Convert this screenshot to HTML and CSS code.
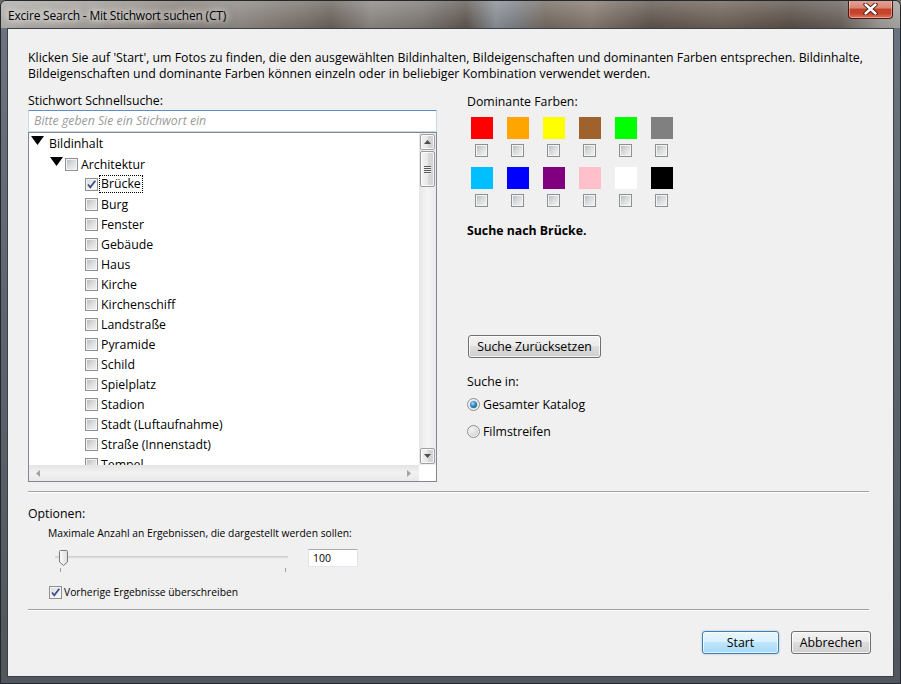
FILE: index.html
```html
<!DOCTYPE html>
<html lang="de">
<head>
<meta charset="utf-8">
<title>Excire Search - Mit Stichwort suchen (CT)</title>
<link rel="stylesheet" href="styles.css">
</head>
<body>
<div class="window">
  <div class="titlebar">
    <span class="title">Excire Search - Mit Stichwort suchen (CT)</span>
    <div class="close">
      <svg width="15" height="12" viewBox="0 0 15 12"><path d="M2.5 1.5 L12.5 10.5 M12.5 1.5 L2.5 10.5" stroke="#3a1510" stroke-width="4.2" stroke-linecap="round"/><path d="M2.5 1.5 L12.5 10.5 M12.5 1.5 L2.5 10.5" stroke="#fff" stroke-width="2.4" stroke-linecap="round"/></svg>
    </div>
  </div>
  <div class="client">
    <p class="intro">Klicken Sie auf 'Start', um Fotos zu finden, die den ausgewählten Bildinhalten, Bildeigenschaften und dominanten Farben entsprechen. Bildinhalte,<br>Bildeigenschaften und dominante Farben können einzeln oder in beliebiger Kombination verwendet werden.</p>

    <div class="main">
      <div class="left">
        <div class="label">Stichwort Schnellsuche:</div>
        <div class="search">Bitte geben Sie ein Stichwort ein</div>
        <div class="tree">
          <div class="view">
            <div class="row lvl0"><svg class="tri" width="13" height="9" viewBox="0 0 13 9"><polygon points="0,0 13,0 6.5,9" fill="#000"/></svg><span>Bildinhalt</span></div>
            <div class="row lvl1"><svg class="tri" width="13" height="9" viewBox="0 0 13 9"><polygon points="0,0 13,0 6.5,9" fill="#000"/></svg><span class="cb"></span><span>Architektur</span></div>
            <div class="row lvl2"><span class="cb checked"><svg width="11" height="11" viewBox="0 0 11 11"><path d="M2 5.5 L4.3 8.3 L9.3 1.8" fill="none" stroke="#3b4f8a" stroke-width="1.8"/></svg></span><span class="focus">Brücke</span></div>
            <div class="row lvl2"><span class="cb"></span><span>Burg</span></div>
            <div class="row lvl2"><span class="cb"></span><span>Fenster</span></div>
            <div class="row lvl2"><span class="cb"></span><span>Gebäude</span></div>
            <div class="row lvl2"><span class="cb"></span><span>Haus</span></div>
            <div class="row lvl2"><span class="cb"></span><span>Kirche</span></div>
            <div class="row lvl2"><span class="cb"></span><span>Kirchenschiff</span></div>
            <div class="row lvl2"><span class="cb"></span><span>Landstraße</span></div>
            <div class="row lvl2"><span class="cb"></span><span>Pyramide</span></div>
            <div class="row lvl2"><span class="cb"></span><span>Schild</span></div>
            <div class="row lvl2"><span class="cb"></span><span>Spielplatz</span></div>
            <div class="row lvl2"><span class="cb"></span><span>Stadion</span></div>
            <div class="row lvl2"><span class="cb"></span><span>Stadt (Luftaufnahme)</span></div>
            <div class="row lvl2"><span class="cb"></span><span>Straße (Innenstadt)</span></div>
            <div class="row lvl2"><span class="cb"></span><span>Tempel</span></div>
          </div>
          <div class="vscroll">
            <div class="sbtn"><svg width="7" height="4" viewBox="0 0 7 4"><polygon points="0,4 7,4 3.5,0" fill="#4d4d4d"/></svg></div>
            <div class="thumb"><span class="grip"></span><span class="grip"></span><span class="grip"></span><span class="grip"></span></div>
            <div class="track"></div>
            <div class="sbtn"><svg width="7" height="4" viewBox="0 0 7 4"><polygon points="0,0 7,0 3.5,4" fill="#4d4d4d"/></svg></div>
          </div>
          <div class="hscroll">
            <svg width="4" height="7" viewBox="0 0 4 7"><polygon points="4,0 4,7 0,3.5" fill="#a3a3a3"/></svg>
            <svg width="4" height="7" viewBox="0 0 4 7"><polygon points="0,0 0,7 4,3.5" fill="#a3a3a3"/></svg>
          </div>
          <div class="corner"></div>
        </div>
      </div>

      <div class="right">
        <div class="label">Dominante Farben:</div>
        <div class="colors">
          <div class="cell"><span class="sw" style="background:#ff0000"></span><span class="cb"></span></div>
          <div class="cell"><span class="sw" style="background:#ffa500"></span><span class="cb"></span></div>
          <div class="cell"><span class="sw" style="background:#ffff00"></span><span class="cb"></span></div>
          <div class="cell"><span class="sw" style="background:#a0622d"></span><span class="cb"></span></div>
          <div class="cell"><span class="sw" style="background:#00ff00"></span><span class="cb"></span></div>
          <div class="cell"><span class="sw" style="background:#808080"></span><span class="cb"></span></div>
          <div class="cell"><span class="sw" style="background:#00bfff"></span><span class="cb"></span></div>
          <div class="cell"><span class="sw" style="background:#0000ff"></span><span class="cb"></span></div>
          <div class="cell"><span class="sw" style="background:#800080"></span><span class="cb"></span></div>
          <div class="cell"><span class="sw" style="background:#ffc0cb"></span><span class="cb"></span></div>
          <div class="cell"><span class="sw" style="background:#ffffff"></span><span class="cb"></span></div>
          <div class="cell"><span class="sw" style="background:#000000"></span><span class="cb"></span></div>
        </div>
        <div class="status">Suche nach Brücke.</div>
        <button class="btn reset">Suche Zurücksetzen</button>
        <div class="label searchin">Suche in:</div>
        <div class="radio-row first"><span class="radio on"></span><span>Gesamter Katalog</span></div>
        <div class="radio-row"><span class="radio"></span><span>Filmstreifen</span></div>
      </div>
    </div>

    <div class="sep sep1"></div>

    <div class="options">
      <div class="label">Optionen:</div>
      <div class="small maxlabel">Maximale Anzahl an Ergebnissen, die dargestellt werden sollen:</div>
      <div class="slider-row">
        <svg class="slider" width="240" height="26" viewBox="0 0 240 26">
          <rect x="5" y="9.5" width="233" height="1" fill="#b4b4b4"/>
          <rect x="5" y="10.5" width="233" height="1" fill="#e6e6e6"/>
          <rect x="10" y="21" width="1" height="4" fill="#a0a0a0"/>
          <rect x="235" y="21" width="1" height="4" fill="#a0a0a0"/>
          <defs><linearGradient id="tg" x1="0" x2="1" y1="0" y2="0"><stop offset="0" stop-color="#fdfdfd"/><stop offset="1" stop-color="#dcdcdc"/></linearGradient></defs>
          <path d="M9.5 4.5 Q9.5 3.5 10.5 3.5 L16.5 3.5 Q17.5 3.5 17.5 4.5 L17.5 15 L13.5 18.5 L9.5 15 Z" fill="url(#tg)" stroke="#787878"/>
        </svg>
        <div class="num">100</div>
      </div>
      <div class="check-row small"><span class="cb checked"><svg width="11" height="11" viewBox="0 0 11 11"><path d="M2 5.5 L4.3 8.3 L9.3 1.8" fill="none" stroke="#3b4f8a" stroke-width="1.8"/></svg></span><span>Vorherige Ergebnisse überschreiben</span></div>
    </div>

    <div class="sep sep2"></div>

    <div class="buttons">
      <button class="btn default">Start</button>
      <button class="btn cancel">Abbrechen</button>
    </div>
  </div>
</div>
</body>
</html>
```

FILE: styles.css
```css
html, body {
  margin: 0;
  padding: 0;
  background: #6f6b66;
}
body {
  width: 901px;
  height: 684px;
  overflow: hidden;
  font-family: "Open Sans", "Noto Sans", sans-serif;
  font-size: 12.3px;
  color: #000;
}
.window {
  width: 901px;
  height: 684px;
  box-sizing: border-box;
  border: 1px solid #23282d;
  border-radius: 6px 6px 0 0;
  background: linear-gradient(to bottom, #6d7680 0px, #5d656e 300px, #4f565e 684px);
  display: flex;
  flex-direction: column;
  overflow: hidden;
}
.titlebar {
  height: 27px;
  flex: none;
  display: flex;
  justify-content: space-between;
  align-items: flex-start;
  background:
    linear-gradient(to bottom, rgba(255,255,255,0.28), rgba(255,255,255,0.05) 27px),
    linear-gradient(to right, #a6a39e 0px, #9b9792 60px, #8c8680 120px, #787069 180px, #807a74 240px, #6a625b 300px, #5b524a 330px, #7d7873 370px, #6e6964 420px, #4f4740 465px, #7b8088 495px, #6d7075 515px, #655a50 545px, #766a60 590px, #4f443c 650px, #5f5247 720px, #4a3f37 790px, #5a504a 840px, #8e8b87 880px, #9c9995 900px);
}
.title {
  margin: 7px 0 0 7px;
  line-height: 16px;
  font-size: 12px;
  color: #000;
  letter-spacing: -0.2px;
  text-shadow: 0 0 6px rgba(255,255,255,0.95), 0 0 10px rgba(255,255,255,0.8), 0 0 14px rgba(255,255,255,0.6);
}
.close {
  width: 45px;
  height: 19px;
  margin: -1px 7px 0 0;
  box-sizing: border-box;
  border: 1px solid #4b1a12;
  border-top: none;
  border-radius: 0 0 4px 4px;
  background: linear-gradient(to bottom, #e5a596 0%, #d88674 45%, #c4402a 50%, #c8452c 75%, #e0735a 100%);
  box-shadow: inset 0 0 0 1px rgba(255,255,255,0.35);
  display: flex;
  align-items: center;
  justify-content: center;
}
.client {
  flex: 1;
  margin: 0 6px 6px 6px;
  border: 1px solid #3a4046;
  background: #f0f0f0;
  padding: 21px 22px 0 20px;
  display: flex;
  flex-direction: column;
}
.intro {
  margin: 0;
  line-height: 16px;
  white-space: nowrap;
}
.label {
  line-height: 16px;
  height: 16px;
}
.main {
  display: flex;
  margin-top: 12px;
}
.left {
  width: 409px;
  display: flex;
  flex-direction: column;
}
.left > .label { margin-top: -1px; height: 17px; }
.search {
  height: 22px;
  box-sizing: border-box;
  border: 1px solid #c5daed;
  border-top-color: #5d8fc4;
  background: #fff;
  color: #9b9b9b;
  font-style: italic;
  padding-left: 5px;
  line-height: 20px;
}
.tree {
  height: 350px;
  box-sizing: border-box;
  border: 1px solid #828790;
  background: #fff;
  display: grid;
  grid-template-columns: 1fr 17px;
  grid-template-rows: 1fr 16px;
}
.view {
  overflow: hidden;
  padding-top: 0;
}
.row {
  height: 20px;
  display: flex;
  align-items: center;
  white-space: nowrap;
}
.row.lvl0 { height: 21px; }
.lvl0 { padding-left: 2px; }
.lvl1 { padding-left: 21px; }
.lvl2 { padding-left: 56px; }
.tri {
  flex: none;
  align-self: flex-start;
}
.lvl0 .tri { margin: 3px 5px 0 0; }
.lvl1 .tri { margin: 3px 2px 0 0; }
.cb {
  flex: none;
  width: 13px;
  height: 13px;
  box-sizing: border-box;
  border: 1px solid #8e8f8f;
  background: linear-gradient(135deg, #b2b6bb 0%, #d8dadc 45%, #f6f6f6 100%);
  box-shadow: inset 0 0 0 1px #f4f4f4;
  display: inline-flex;
  align-items: center;
  justify-content: center;
}
.cb.checked {
  background: linear-gradient(135deg, #d4d7db 0%, #eeeeee 50%, #fbfbfb 100%);
}
.cb svg { display: block; }
.row .cb { margin-right: 3px; }
.lvl2 .cb { margin-right: 2px; }
.focus {
  outline: 1px dotted #000;
  outline-offset: 0;
  padding: 0 1px;
  line-height: 16px;
}
.lvl2 span:last-child:not(.focus) { padding-left: 1px; }
.vscroll {
  background: linear-gradient(to right, #e6e6e6, #f5f5f5 50%, #eaeaea);
  display: flex;
  flex-direction: column;
  padding: 1px;
  box-sizing: border-box;
}
.sbtn {
  height: 16px;
  flex: none;
  box-sizing: border-box;
  border: 1px solid #a0a0a0;
  border-radius: 2px;
  background: linear-gradient(to right, #f2f2f2, #e6e6e6 50%, #d6d6d6 51%, #d0d0d0);
  box-shadow: inset 0 0 0 1px rgba(255,255,255,0.8);
  display: flex;
  align-items: center;
  justify-content: center;
}
.thumb {
  height: 36px;
  margin-top: 1px;
  flex: none;
  box-sizing: border-box;
  border: 1px solid #9a9a9a;
  border-radius: 2px;
  background: linear-gradient(to right, #f4f4f4, #e8e8e8 50%, #d9d9d9 51%, #d2d2d2);
  box-shadow: inset 0 0 0 1px rgba(255,255,255,0.8);
  display: flex;
  flex-direction: column;
  align-items: center;
  justify-content: center;
  gap: 1px;
}
.grip {
  width: 7px;
  height: 1px;
  background: #5a5a5a;
  box-shadow: 0 1px 0 #f0f0f0;
}
.track { flex: 1; }
.hscroll {
  background: linear-gradient(to bottom, #e4e4e4, #f2f2f2 50%, #e9e9e9);
  display: flex;
  align-items: center;
  justify-content: space-between;
  padding: 0 8px 0 7px;
}
.hscroll svg { display: block; }
.corner { background: #fff; }

.right {
  margin-left: 30px;
  display: flex;
  flex-direction: column;
  align-items: flex-start;
}
.colors {
  margin: 7px 0 0 4px;
  display: grid;
  grid-template-columns: repeat(6, 22px);
  column-gap: 14px;
  row-gap: 10px;
}
.cell {
  display: flex;
  flex-direction: column;
  align-items: center;
}
.cell .cb { margin-left: -1px; }
.sw {
  width: 22px;
  height: 22px;
  margin-bottom: 5px;
}
.status {
  margin-top: 16px;
  font-weight: bold;
  line-height: 16px;
}
.btn {
  font-family: "Open Sans", "Noto Sans", sans-serif;
  font-size: 12.3px;
  color: #000;
  height: 23px;
  padding: 0;
  box-sizing: border-box;
  border: 1px solid #707070;
  border-radius: 3px;
  background: linear-gradient(to bottom, #f2f2f2 0%, #ebebeb 49%, #dddddd 50%, #cfcfcf 100%);
  box-shadow: inset 0 0 0 1px rgba(255,255,255,0.75);
  line-height: 19px;
}
.reset {
  margin: 96px 0 0 1px;
  width: 133px;
}
.searchin { margin-top: 16px; }
.radio-row {
  height: 20px;
  display: flex;
  align-items: center;
}
.radio-row.first { margin-top: 4px; }
.radio-row + .radio-row { margin-top: 7px; }
.radio {
  width: 13px;
  height: 13px;
  box-sizing: border-box;
  border-radius: 50%;
  border: 1px solid #8e8f8f;
  background: radial-gradient(circle at 35% 35%, #f4f4f4 0%, #d6d8da 60%, #c0c3c6 100%);
  box-shadow: inset 0 0 0 1px #f4f4f4;
  margin-right: 3px;
  display: flex;
  align-items: center;
  justify-content: center;
}
.radio.on::after {
  content: "";
  width: 7px;
  height: 7px;
  border-radius: 50%;
  background: radial-gradient(circle at 40% 35%, #a9dcf5 0%, #2e8ac0 45%, #0b4a78 100%);
}
.sep {
  height: 1px;
  background: #a0a0a0;
  border-bottom: 1px solid #ffffff;
  margin-right: 2px;
}
.sep1 { margin-top: 9px; }
.options {
  display: flex;
  flex-direction: column;
}
.options > .label { margin-top: 13px; }
.small {
  font-size: 10.3px;
  line-height: 14px;
}
.maxlabel {
  margin: 4px 0 0 20px;
}
.slider-row {
  margin: 7px 0 0 22px;
  display: flex;
  align-items: flex-start;
  height: 26px;
}
.slider { display: block; }
.num {
  margin: 2px 0 0 18px;
  width: 50px;
  height: 18px;
  box-sizing: border-box;
  border: 1px solid #e2e3ea;
  border-top-color: #abadb3;
  border-bottom-color: #e3e9ef;
  background: #fff;
  font-size: 10.5px;
  line-height: 16px;
  padding-left: 4px;
}
.check-row {
  margin: 11px 0 0 21px;
  height: 16px;
  display: flex;
  align-items: center;
}
.check-row .cb { margin-right: 2px; }
.sep2 { margin-top: 9px; }
.buttons {
  margin-top: 20px;
  display: flex;
  justify-content: flex-end;
  gap: 12px;
}
.btn.default {
  width: 77px;
  border-color: #3c7fb1;
  background: linear-gradient(to bottom, #eaf6fd 0%, #d9f0fc 49%, #bee6fd 50%, #a7d9f5 100%);
  box-shadow: inset 0 0 0 1px rgba(255,255,255,0.7), 0 0 2px rgba(60,127,177,0.5);
}
.btn.cancel { width: 80px; }
```
